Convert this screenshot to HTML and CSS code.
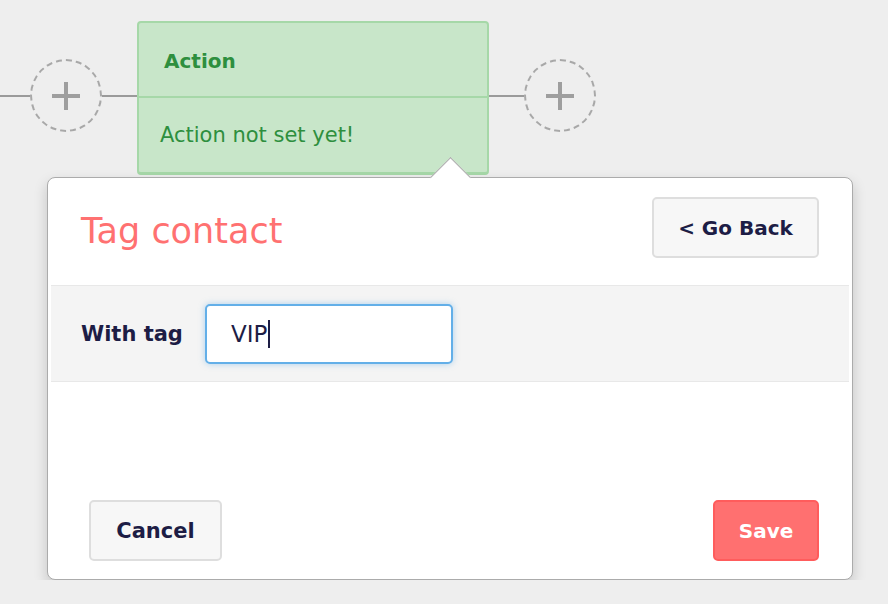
FILE: index.html
```html
<!DOCTYPE html>
<html lang="en">
<head>
    <meta charset="UTF-8">
    <title>Tag contact</title>
    <link rel="stylesheet" href="styles.css">
</head>
<body>
    <div class="flow">
        <div class="connector first"></div>
        <div class="add"><span class="plus"></span></div>
        <div class="connector"></div>
        <div class="step">
            <div class="step_title">Action</div>
            <div class="step_body">Action not set yet!</div>
        </div>
        <div class="connector"></div>
        <div class="add"><span class="plus"></span></div>
    </div>

    <div class="popup">
        <div class="arrow"></div>
        <div class="popup_head">
            <h2>Tag contact</h2>
            <button class="btn back">&lt; Go Back</button>
        </div>
        <div class="field_row">
            <label for="tag">With tag</label>
            <div class="input" id="tag">VIP<span class="caret"></span></div>
        </div>
        <div class="popup_foot">
            <button class="btn cancel">Cancel</button>
            <button class="btn save">Save</button>
        </div>
    </div>
</body>
</html>
```

FILE: styles.css
```css
body{
    margin: 0;
    padding: 0;
    background-color: #eeeeee;
    font-family: 'DejaVu Sans', 'Open Sans', sans-serif;
    color: #1d1d45;
}
.flow{
    display: flex;
    align-items: flex-start;
    padding-top: 21px;
}
.connector{
    width: 35px;
    height: 2px;
    margin-top: 74px;
    background-color: #9a9a9a;
}
.connector.first{
    width: 30px;
}
.add{
    width: 68px;
    height: 69px;
    margin-top: 38px;
    border: 2px dashed #a8a8a8;
    border-radius: 50%;
    display: flex;
    align-items: center;
    justify-content: center;
}
.plus{
    width: 28px;
    height: 28px;
    position: relative;
}
.plus::before,.plus::after{
    content: '';
    position: absolute;
    background-color: #9e9e9e;
}
.plus::before{
    left: 0;
    top: 12px;
    width: 28px;
    height: 4px;
}
.plus::after{
    left: 12px;
    top: 0;
    width: 4px;
    height: 28px;
}
.step{
    width: 348px;
    height: 149px;
    border: 2px solid #a6d8a8;
    border-bottom-width: 3px;
    border-radius: 4px;
    background-color: #c8e6c9;
    color: #2e8f3e;
}
.step_title{
    height: 73px;
    border-bottom: 2px solid #a6d8a8;
    padding-left: 25px;
    line-height: 76px;
    font-size: 20px;
    font-weight: 700;
}
.step_body{
    padding: 25px 0 0 21px;
    font-size: 21px;
}
.popup{
    position: relative;
    width: 804px;
    height: 401px;
    margin: 2px 0 0 47px;
    background-color: #fff;
    border: 1px solid #ababab;
    border-radius: 8px;
    box-shadow: 0 6px 14px rgba(0,0,0,0.18);
    display: flex;
    flex-direction: column;
}
.arrow{
    position: absolute;
    left: 388px;
    top: -15px;
    width: 28px;
    height: 28px;
    background-color: #fff;
    border-top: 1px solid #ababab;
    border-left: 1px solid #ababab;
    transform: rotate(45deg);
}
.popup_head{
    display: flex;
    align-items: center;
    justify-content: space-between;
    padding: 19px 33px 27px 33px;
    position: relative;
}
.popup_head h2{
    margin: 0;
    padding-top: 6px;
    font-size: 35px;
    font-weight: 400;
    color: #ff7171;
}
.btn{
    font-family: inherit;
    font-size: 21px;
    font-weight: 700;
    color: #1d1d45;
    background-color: #f7f7f7;
    border: 2px solid #dedede;
    border-radius: 5px;
    height: 61px;
    padding: 0;
    cursor: pointer;
}
.back{
    width: 167px;
    font-size: 20px;
}
.field_row{
    display: flex;
    align-items: center;
    height: 95px;
    margin: 0 3px;
    padding-left: 30px;
    background-color: #f4f4f4;
    border-top: 1px solid #e8e8e8;
    border-bottom: 1px solid #e8e8e8;
}
.field_row label{
    font-size: 21px;
    font-weight: 700;
    width: 124px;
}
.input{
    width: 220px;
    height: 56px;
    padding-left: 24px;
    background-color: #fff;
    border: 2px solid #63afe8;
    border-radius: 5px;
    box-shadow: 0 0 6px rgba(99,175,232,0.5);
    font-size: 23px;
    display: flex;
    align-items: center;
}
.caret{
    width: 2px;
    height: 28px;
    margin-left: 1px;
    background-color: #1d1d45;
}
.popup_foot{
    margin-top: auto;
    display: flex;
    justify-content: space-between;
    padding: 0 33px 18px 41px;
}
.cancel{
    width: 133px;
}
.save{
    width: 106px;
    font-size: 20px;
    color: #fff;
    background-color: #ff7070;
    border-color: #ff5c5c;
}
```
